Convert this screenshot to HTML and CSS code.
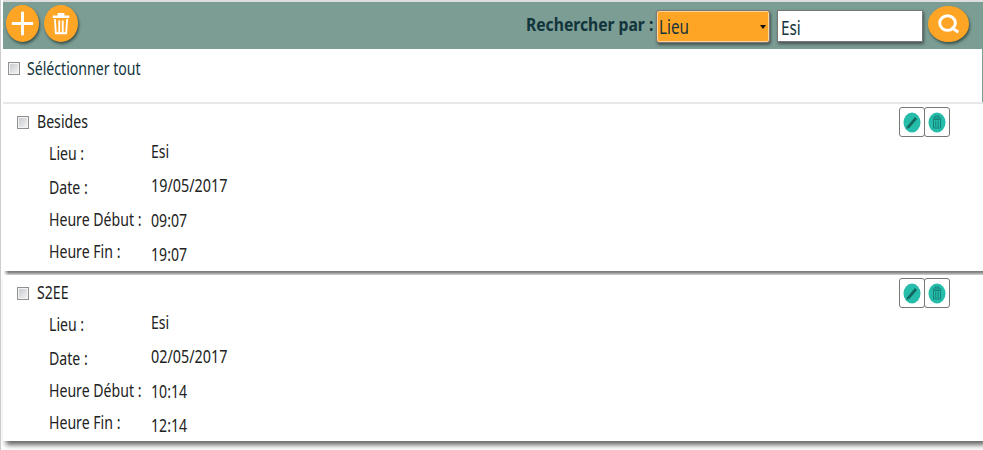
FILE: index.html
```html
<!DOCTYPE html>
<html lang="fr">
<head>
<meta charset="utf-8">
<title>Événements</title>
<link rel="stylesheet" href="styles.css">
</head>
<body>
<svg class="defs" aria-hidden="true">
  <symbol id="plus" viewBox="0 0 34 38"><path d="M17 7v24M6 19h22" stroke="#fff" stroke-width="3" fill="none"/></symbol>
  <symbol id="bin" viewBox="0 0 35 38"><path d="M9 12h17M14 9.500h7" stroke="#fff" stroke-width="2.600" fill="none"/><path d="M11.200 14.500l1 14.500h10.600l1-14.500M15.700 16v13M19.300 16v13" stroke="#fff" stroke-width="1.900" fill="none"/></symbol>
  <symbol id="search" viewBox="0 0 42 36"><ellipse cx="20" cy="17" rx="8" ry="7.500" fill="none" stroke="#fff" stroke-width="3"/><path d="M24 21.500l7 5" stroke="#fff" stroke-width="3"/></symbol>
  <symbol id="edit" viewBox="0 0 26 30"><ellipse cx="13" cy="15.500" rx="8.500" ry="10" fill="#26bcaa"/><path d="M9 20.300l8-9.300" stroke="#13675f" stroke-width="2.700"/><path d="M7.300 22l.7-3 2 1.700z" fill="#13675f"/></symbol>
  <symbol id="remove" viewBox="0 0 26 30"><ellipse cx="13" cy="15.500" rx="8.500" ry="10" fill="#26bcaa"/><path d="M8.500 11h9M11 10.500V9h4v1.500M9.500 12.500v8.500h7v-8.500zM11.800 13.500v6.500M14.200 13.500v6.500" fill="none" stroke="#137c72" stroke-width=".9"/></symbol>
</svg>
<header class="toolbar">
  <button class="round add" aria-label="Ajouter"><svg><use href="#plus"/></svg></button>
  <button class="round trash" aria-label="Supprimer"><svg><use href="#bin"/></svg></button>
  <div class="label"><b>Rechercher par :</b></div>
  <div class="select"><span>Lieu</span><i></i></div>
  <div class="field"><span>Esi</span></div>
  <button class="round find" aria-label="Rechercher"><svg><use href="#search"/></svg></button>
</header>
<main>
  <div class="all"><i class="check"></i><span>Séléctionner tout</span></div>
  <section class="card">
    <div class="head"><i class="check"></i><span>Besides</span>
      <div class="actions"><button><svg><use href="#edit"/></svg></button><button><svg><use href="#remove"/></svg></button></div>
    </div>
    <dl>
      <dt><span>Lieu :</span></dt><dd><span>Esi</span></dd>
      <dt><span>Date :</span></dt><dd><span class="date">19/05/2017</span></dd>
      <dt><span>Heure Début :</span></dt><dd class="low"><span>09:07</span></dd>
      <dt><span>Heure Fin :</span></dt><dd class="lower"><span>19:07</span></dd>
    </dl>
  </section>
  <section class="card">
    <div class="head"><i class="check"></i><span>S2EE</span>
      <div class="actions"><button><svg><use href="#edit"/></svg></button><button><svg><use href="#remove"/></svg></button></div>
    </div>
    <dl>
      <dt><span>Lieu :</span></dt><dd><span>Esi</span></dd>
      <dt><span>Date :</span></dt><dd><span class="date">02/05/2017</span></dd>
      <dt><span>Heure Début :</span></dt><dd class="low"><span>10:14</span></dd>
      <dt><span>Heure Fin :</span></dt><dd class="lower"><span>12:14</span></dd>
    </dl>
  </section>
</main>
</body>
</html>
```
FILE: styles.css
```css
* { box-sizing: border-box; }
body { margin: 0; height: 450px; overflow: hidden; background: #fff; border-left: 1px solid #ccc; font: 400 17.5px/22px "Noto Sans", sans-serif; color: #222; }
.defs { position: absolute; width: 0; height: 0; }
button { padding: 0; border: 0; display: block; }
svg { display: block; width: 100%; height: 100%; }
span, b { display: inline-block; white-space: nowrap; transform: scaleX(.806); transform-origin: left center; }
b { transform: scaleX(.87); }
.toolbar { height: 49px; margin-left: 2px; border-top: 2px solid #dedede; background: #7b9d94; display: flex; align-items: flex-start; color: #12343b; }
.round { flex: none; background: #ffa526; border-radius: 50%; box-shadow: 1px 2px 3px #38504a; }
.add { width: 33px; height: 37px; margin: 3px 0 0 3px; }
.trash { width: 34px; height: 37px; margin: 3px 0 0 5px; }
.label { width: 130px; margin: 11px 0 0 448px; font-size: 18px; }
.select { width: 114px; height: 33px; margin-top: 8px; border: 1px solid #777; border-radius: 3px; background: #ffa526; box-shadow: inset 0 0 0 1px #ffd49a, 1px 2px 3px #46534f; padding: 5px 3px 0 2px; display: flex; justify-content: space-between; font-size: 19px; }
.select i { border: 3px solid transparent; border-top: 4px solid #111; border-bottom: 0; height: 4px; margin-top: 9px; }
.field { width: 146px; height: 32px; margin: 8px 0 0 7px; border: 1px solid #777; background: #fff; box-shadow: 1px 2px 3px #46534f; padding: 6px 3px; font-size: 19px; }
.find { width: 41px; height: 36px; margin: 4px 0 0 5px; }
.all { height: 53px; padding: 8px 0 0 7px; display: flex; color: #12343b; border-right: 1px solid #7b9d94; }
.check { flex: none; width: 12px; height: 13px; border: 1px solid #909090; background: linear-gradient(135deg, #c3c7cd, #f6f6f6); box-shadow: inset 0 0 0 1px #f4f4f4; margin-top: 5px; }
.all span { margin-left: 7px; }
.card { position: relative; height: 169px; margin-left: 2px; border-top: 2px solid #e7e7e7; box-shadow: 3px 3px 3px #777; background: #fff; }
.card + .card { height: 166px; margin-top: 4px; border-top: 0; box-shadow: 3px 4px 5px #666; }
.head { height: 36px; padding: 6px 0 0 14px; display: flex; }
.head .check { margin-top: 6px; }
.head span { margin-left: 8px; }
.actions { display: flex; position: absolute; right: 34px; top: 3px; }
.actions button { width: 26px; height: 30px; background: #fff; border: 1px solid #777; border-radius: 3px; margin-right: -1px; }
.actions svg { margin: -1px; width: 26px; height: 30px; }
dl { margin: 0 0 0 46px; display: grid; grid-template-columns: 102px 1fr; grid-template-rows: 34px 32px 32px 32px; }
dt { padding-top: 2px; }
dd { margin: 0; }
.date { transform: scaleX(.82); }
.low { padding-top: 3px; }
.lower { padding-top: 5px; }
```
